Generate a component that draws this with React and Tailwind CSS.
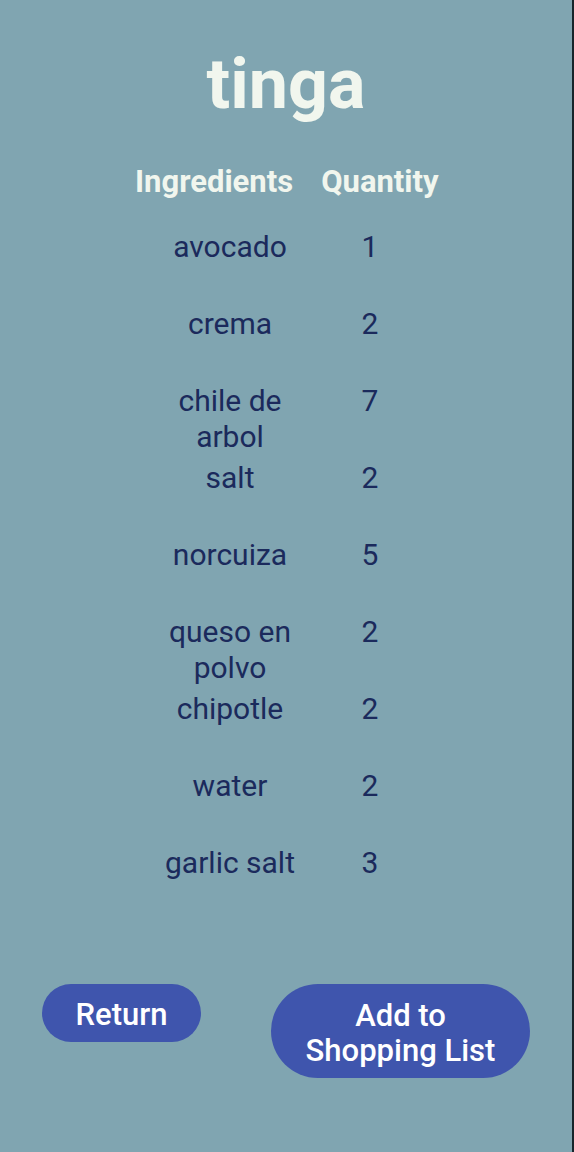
const ingredients = [
  { name: "avocado", qty: 1 },
  { name: "crema", qty: 2 },
  { name: "chile de arbol", qty: 7 },
  { name: "salt", qty: 2 },
  { name: "norcuiza", qty: 5 },
  { name: "queso en polvo", qty: 2 },
  { name: "chipotle", qty: 2 },
  { name: "water", qty: 2 },
  { name: "garlic salt", qty: 3 },
];

const App = () => {
  return (
    <div
      className="w-[574px] h-[1152px] bg-[#80a5b1] border-r-2 border-[#15252b] flex flex-col"
      style={{ fontFamily: "Roboto, 'Liberation Sans', sans-serif" }}
    >
      <h1 className="mt-[44px] text-center text-[70px] leading-[80px] font-bold text-[#f1f6ee]">
        tinga
      </h1>

      <div className="mt-[40px] flex pl-[135px] gap-[28px] text-[31px] leading-[36px] font-bold text-[#f1f6ee]">
        <span>Ingredients</span>
        <span>Quantity</span>
      </div>

      <div className="mt-[29px] flex flex-col text-[30px] leading-[36px] text-[#1b2a5c]">
        {ingredients.map((item) => (
          <div key={item.name} className="h-[77px] flex">
            <div className="ml-[155px] w-[150px] text-center">{item.name}</div>
            <div className="ml-[35px] w-[60px] text-center">{item.qty}</div>
          </div>
        ))}
      </div>

      <div className="mt-[62px] flex items-start">
        <button className="ml-[42px] w-[159px] pt-[13px] pb-[10px] rounded-full bg-[#3f55ad] text-white text-[31px] font-medium leading-[35px]">
          Return
        </button>
        <button className="ml-[70px] w-[259px] pt-[14px] pb-[10px] rounded-full bg-[#3f55ad] text-white text-[31px] font-medium leading-[35px]">
          Add to
          <br />
          Shopping List
        </button>
      </div>
    </div>
  );
};

export default App;
